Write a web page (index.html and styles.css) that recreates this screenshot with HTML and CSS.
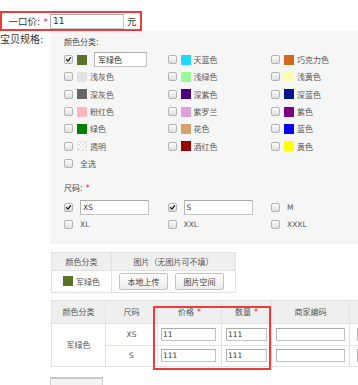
FILE: index.html
```html
<!DOCTYPE html>
<html>
<head>
<meta charset="utf-8">
<link rel="stylesheet" href="styles.css">
</head>
<body>
<div class="page">
  <div class="price-row">
    <span class="price-label">一口价:<span class="req">*</span></span>
    <span class="text-input price-input">11</span>
    <span class="unit">元</span>
  </div>

  <div class="spec">
    <div class="spec-label">宝贝规格:</div>
    <div class="panel">
      <div class="group-title">颜色分类:</div>
      <div class="grid color-grid">
        <div class="cell"><span class="cb on"><svg viewBox="0 0 9 9"><path d="M2 4.6 L3.8 6.6 L7.2 2.2"/></svg></span><span class="sw" style="background:#5b7327"></span><span class="text-input color-input">军绿色</span></div>
        <div class="cell"><span class="cb"></span><span class="sw" style="background:#1fd7ff"></span><span class="lbl">天蓝色</span></div>
        <div class="cell"><span class="cb"></span><span class="sw" style="background:#d2691e"></span><span class="lbl">巧克力色</span></div>

        <div class="cell"><span class="cb"></span><span class="sw" style="background:#e2e2e2"></span><span class="lbl">浅灰色</span></div>
        <div class="cell"><span class="cb"></span><span class="sw" style="background:#98fb98"></span><span class="lbl">浅绿色</span></div>
        <div class="cell"><span class="cb"></span><span class="sw" style="background:#ffffb1"></span><span class="lbl">浅黄色</span></div>

        <div class="cell"><span class="cb"></span><span class="sw" style="background:#666666"></span><span class="lbl">深灰色</span></div>
        <div class="cell"><span class="cb"></span><span class="sw" style="background:#4b0082"></span><span class="lbl">深紫色</span></div>
        <div class="cell"><span class="cb"></span><span class="sw" style="background:#041690"></span><span class="lbl">深蓝色</span></div>

        <div class="cell"><span class="cb"></span><span class="sw" style="background:#ffb6c1"></span><span class="lbl">粉红色</span></div>
        <div class="cell"><span class="cb"></span><span class="sw" style="background:#dda0dd"></span><span class="lbl">紫罗兰</span></div>
        <div class="cell"><span class="cb"></span><span class="sw" style="background:#800080"></span><span class="lbl">紫色</span></div>

        <div class="cell"><span class="cb"></span><span class="sw" style="background:#008000"></span><span class="lbl">绿色</span></div>
        <div class="cell"><span class="cb"></span><span class="sw sw-flower"></span><span class="lbl">花色</span></div>
        <div class="cell"><span class="cb"></span><span class="sw" style="background:#0000ff"></span><span class="lbl">蓝色</span></div>

        <div class="cell"><span class="cb"></span><span class="sw sw-clear"></span><span class="lbl">透明</span></div>
        <div class="cell"><span class="cb"></span><span class="sw" style="background:#9b0000"></span><span class="lbl">酒红色</span></div>
        <div class="cell"><span class="cb"></span><span class="sw" style="background:#ffff00"></span><span class="lbl">黄色</span></div>

        <div class="cell"><span class="cb"></span><span class="lbl wide">全选</span></div>
      </div>

      <div class="group-title size-title">尺码:<span class="req">*</span></div>
      <div class="grid size-grid">
        <div class="cell"><span class="cb on"><svg viewBox="0 0 9 9"><path d="M2 4.6 L3.8 6.6 L7.2 2.2"/></svg></span><span class="text-input size-input">XS</span></div>
        <div class="cell"><span class="cb on"><svg viewBox="0 0 9 9"><path d="M2 4.6 L3.8 6.6 L7.2 2.2"/></svg></span><span class="text-input size-input">S</span></div>
        <div class="cell"><span class="cb"></span><span class="lbl wide latin">M</span></div>
        <div class="cell"><span class="cb"></span><span class="lbl wide latin">XL</span></div>
        <div class="cell"><span class="cb"></span><span class="lbl wide latin">XXL</span></div>
        <div class="cell"><span class="cb"></span><span class="lbl wide latin">XXXL</span></div>
      </div>
    </div>
  </div>

  <table class="tbl img-tbl">
    <tr class="head">
      <th class="c-color1">颜色分类</th>
      <th class="c-img">图片（无图片可不填）</th>
    </tr>
    <tr class="img-row">
      <td><span class="sw small-sw" style="background:#5b7327"></span>军绿色</td>
      <td class="btns"><span class="btn">本地上传</span><span class="btn">图片空间</span></td>
    </tr>
  </table>

  <div class="sku-wrap">
    <table class="tbl sku-tbl">
      <tr class="head">
        <th class="k1">颜色分类</th>
        <th class="k2">尺码</th>
        <th class="k3">价格<span class="req">*</span></th>
        <th class="k4">数量<span class="req">*</span></th>
        <th class="k5">商家编码</th>
        <th class="k6"></th>
      </tr>
      <tr class="r1">
        <td rowspan="2">军绿色</td>
        <td class="latin">XS</td>
        <td class="in-cell"><span class="text-input cell-in w-price">11</span></td>
        <td class="in-cell"><span class="text-input cell-in w-qty">111</span></td>
        <td class="in-cell"><span class="text-input cell-in w-code"></span></td>
        <td class="in-cell last"><span class="text-input cell-in w-last"></span></td>
      </tr>
      <tr class="r2">
        <td class="latin">S</td>
        <td class="in-cell"><span class="text-input cell-in w-price">111</span></td>
        <td class="in-cell"><span class="text-input cell-in w-qty">111</span></td>
        <td class="in-cell"><span class="text-input cell-in w-code"></span></td>
        <td class="in-cell last"><span class="text-input cell-in w-last"></span></td>
      </tr>
    </table>
    <div class="mark"></div>
  </div>

  <div class="bottom-btn"></div>
</div>
</body>
</html>
```

FILE: styles.css
```css
html, body {
  margin: 0;
  padding: 0;
  background: #ffffff;
  overflow: hidden;
}

.page {
  width: 358px;
  height: 385px;
  overflow: hidden;
  font-family: "DejaVu Sans", "Noto Sans CJK SC", sans-serif;
  font-size: 8px;
  color: #444;
}

.req {
  color: #e8262b;
  margin-left: 3px;
}

/* top price row */
.price-row {
  display: flex;
  align-items: center;
  box-sizing: border-box;
  width: 142px;
  height: 20px;
  margin-top: 11px;
  border: 2px solid #ee3a3a;
}

.price-label {
  width: 46px;
  text-align: right;
  font-size: 9.5px;
  color: #333;
  margin-right: 2px;
  white-space: nowrap;
}

.text-input {
  display: flex;
  align-items: center;
  box-sizing: border-box;
  background: #fff;
  border: 1px solid #c4c4c4;
  border-top-color: #a9a9a9;
  border-left-color: #b5b5b5;
  padding-left: 2px;
  color: #333;
  font-size: 8px;
  white-space: nowrap;
}

.price-input {
  width: 74px;
  height: 15px;
  font-size: 9px;
}

.unit {
  margin-left: 3px;
  font-size: 9.5px;
  color: #333;
}

/* spec */
.spec {
  display: flex;
}

.spec-label {
  width: 50px;
  flex: none;
  padding-top: 3px;
  font-size: 10px;
  line-height: 12px;
  color: #333;
  white-space: nowrap;
}

.panel {
  flex: 1;
  background: #f6f6f6;
  padding: 6px 0 11px 14px;
}

.group-title {
  height: 12px;
  line-height: 12px;
  color: #444;
}

.size-title {
  margin-top: 11px;
}

.grid {
  display: grid;
  grid-template-columns: 103.5px 103.5px 1fr;
  grid-auto-rows: 17.3px;
}

.color-grid {
  margin-top: 2px;
}

.size-grid {
  margin-top: 3.3px;
}

.cell {
  display: flex;
  align-items: center;
  white-space: nowrap;
}

.cb {
  display: block;
  flex: none;
  box-sizing: border-box;
  width: 9px;
  height: 9px;
  border: 1px solid #b3b3b3;
  border-radius: 2px;
  background: linear-gradient(#fdfdfd, #dedede);
  margin-right: 4px;
}

.cb svg {
  display: block;
  width: 7px;
  height: 7px;
}

.cb svg path {
  fill: none;
  stroke: #1a1a1a;
  stroke-width: 1.7;
  stroke-linecap: round;
  stroke-linejoin: round;
}

.sw {
  display: block;
  flex: none;
  width: 10px;
  height: 10px;
  margin-right: 3px;
}

.sw-flower {
  background: linear-gradient(135deg, #e59a6a, #c9aa6a);
}

.sw-clear {
  box-sizing: border-box;
  border: 1px solid #e4e4e4;
  background-color: #fff;
  background-image: conic-gradient(#e6e6e6 25%, #fff 25% 50%, #e6e6e6 50% 75%, #fff 75%);
  background-size: 4px 4px;
}

.lbl {
  color: #555;
}

.lbl.wide {
  margin-left: 3px;
}

.latin {
  font-size: 7.5px;
}

.color-input {
  width: 53px;
  height: 15px;
  margin-left: 4px;
  padding-left: 3px;
}

.size-grid .cb {
  margin-right: 7px;
}

.size-grid .lbl.wide {
  margin-left: 0;
}

.size-input {
  width: 69px;
  height: 15px;
  font-size: 7.5px;
}

/* tables */
.tbl {
  border-collapse: collapse;
  table-layout: fixed;
}

.tbl th, .tbl td {
  border: 1px solid #e2e2e2;
  padding: 0;
  text-align: center;
  vertical-align: middle;
  white-space: nowrap;
  font-weight: normal;
  color: #555;
}

.tbl .head th {
  background: #efefef;
}

.img-tbl {
  margin: 8px 0 0 51px;
  width: 182px;
}

.img-tbl .head th {
  height: 17px;
}

.c-color1 { width: 59px; }
.c-img { width: 123px; }

.img-row td {
  height: 21px;
  background: #fff;
}

.small-sw {
  display: inline-block;
  vertical-align: -1px;
  margin-right: 3px;
}

.btns {
  text-align: left;
}

.img-tbl .btns {
  text-align: left;
  padding-left: 7px;
}

.btn {
  display: inline-flex;
  align-items: center;
  justify-content: center;
  box-sizing: border-box;
  width: 49px;
  height: 17px;
  margin-right: 7px;
  border: 1px solid #c2c2c2;
  border-radius: 2px;
  background: linear-gradient(#ffffff, #ececec);
  color: #444;
  vertical-align: middle;
}

.sku-wrap {
  position: relative;
  margin: 7px 0 0 51px;
  width: 400px;
}

.sku-tbl {
  width: 360px;
}

.sku-tbl .head th {
  height: 22px;
}

.k1 { width: 53px; }
.k2 { width: 51px; }
.k3 { width: 63px; }
.k4 { width: 49px; }
.k5 { width: 77px; }
.k6 { width: 67px; }

.sku-tbl td {
  background: #fff;
}

.r1 td { height: 21px; }
.r2 td { height: 20px; }

.in-cell {
  text-align: left;
}

.cell-in {
  height: 13px;
  font-size: 7.5px;
  margin-left: 3px;
  padding-left: 1px;
}

.w-price { width: 55px; }
.w-qty { width: 41px; margin-left: 4px; }
.w-code { width: 69px; margin-left: 4px; }
.w-last { width: 60px; margin-left: 7px; }

.mark {
  position: absolute;
  left: 102px;
  top: 6px;
  width: 118px;
  height: 64px;
  box-sizing: border-box;
  border: 2px solid #ee3a3a;
}

.bottom-btn {
  margin: 10px 0 0 50px;
  width: 53px;
  height: 12px;
  box-sizing: border-box;
  border: 1px solid #d0d0d0;
  border-top: 2px solid #c8c8c8;
  background: #f4f4f4;
}
```
